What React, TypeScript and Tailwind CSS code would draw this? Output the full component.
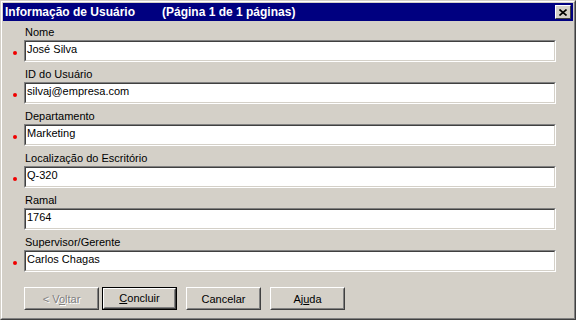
import * as React from 'react';

type FieldProps = { label: string; value: string; required?: boolean };

// Sunken text field with optional red "required" marker on the left
const Field = ({ label, value, required }: FieldProps) => (
    <div className="flex">
        <div className="w-[21px] shrink-0">
            {required && <div className="mt-[27px] ml-[10px] w-[4px] h-[4px] rounded-full bg-[#f00000]" />}
        </div>
        <div className="flex-1">
            <div className="h-[16px] leading-[16px] pl-[1px]">{label}</div>
            <div className="h-[22px] border border-t-[#808080] border-l-[#808080] border-r-white border-b-white">
                <div className="h-full border border-t-[#404040] border-l-[#404040] border-r-[#d4d0c8] border-b-[#d4d0c8] bg-white pl-[1px] leading-[15px] whitespace-nowrap">
                    {value}
                </div>
            </div>
        </div>
    </div>
);

const Btn = ({ children, def, disabled }: { children: React.ReactNode; def?: boolean; disabled?: boolean }) => (
    <div className={def ? 'w-[75px] h-[23px] border border-black' : 'w-[75px] h-[23px]'}>
        {def ? (
            <div className="h-full border border-t-white border-l-white border-r-[#404040] border-b-[#404040]">
                <div className="h-full border border-t-[#d4d0c8] border-l-[#d4d0c8] border-r-[#808080] border-b-[#808080] text-center leading-[17px]">
                    {children}
                </div>
            </div>
        ) : (
            <div className="h-full border border-t-white border-l-white border-r-[#404040] border-b-[#404040]">
                <div
                    className={
                        disabled
                            ? 'h-full border border-t-[#d4d0c8] border-l-[#d4d0c8] border-r-[#808080] border-b-[#808080] text-center leading-[20px] text-[#808080] [text-shadow:1px_1px_0_#ffffff]'
                            : 'h-full border border-t-[#d4d0c8] border-l-[#d4d0c8] border-r-[#808080] border-b-[#808080] text-center leading-[20px]'
                    }
                >
                    {children}
                </div>
            </div>
        )}
    </div>
);

export default function App() {
    const fields: FieldProps[] = [
        { label: 'Nome', value: 'José Silva', required: true },
        { label: 'ID do Usuário', value: 'silvaj@empresa.com', required: true },
        { label: 'Departamento', value: 'Marketing', required: true },
        { label: 'Localização do Escritório', value: 'Q-320', required: true },
        { label: 'Ramal', value: '1764' },
        { label: 'Supervisor/Gerente', value: 'Carlos Chagas', required: true },
    ];

    return (
        <div className="w-[576px] h-[320px] bg-[#d4d0c8] text-black text-[11px] font-['Liberation_Sans',Arial,sans-serif] border border-t-[#d4d0c8] border-l-[#d4d0c8] border-r-[#404040] border-b-[#404040] overflow-hidden">
            <div className="h-full border border-t-white border-l-white border-r-[#808080] border-b-[#808080] p-[1px]">
                {/* Title bar */}
                <div className="h-[18px] bg-[#000080] flex items-center text-white font-bold text-[12px]">
                    <span className="pl-[2px] w-[159px] leading-[18px]">Informação de Usuário</span>
                    <span className="leading-[18px]">(Página 1 de 1 páginas)</span>
                    <div className="ml-auto mr-[2px] w-[16px] h-[14px] bg-[#d4d0c8] border border-t-white border-l-white border-r-[#404040] border-b-[#404040] flex items-center justify-center">
                        <svg width="8" height="7" viewBox="0 0 8 7">
                            <path d="M0.5 0.5 L7.5 6.5 M7.5 0.5 L0.5 6.5" stroke="#000" strokeWidth="1.6" />
                        </svg>
                    </div>
                </div>

                {/* Form */}
                <div className="mt-[3px] pr-[17px] flex flex-col gap-[4px]">
                    {fields.map((f) => (
                        <Field key={f.label} {...f} />
                    ))}
                </div>

                {/* Buttons */}
                <div className="mt-[15px] pl-[21px] flex">
                    <Btn disabled>
                        &lt; V<u>o</u>ltar
                    </Btn>
                    <div className="ml-[3px]">
                        <Btn def>
                            <u>C</u>oncluir
                        </Btn>
                    </div>
                    <div className="ml-[9px]">
                        <Btn>Cancelar</Btn>
                    </div>
                    <div className="ml-[9px]">
                        <Btn>
                            Aj<u>u</u>da
                        </Btn>
                    </div>
                </div>
            </div>
        </div>
    );
}
